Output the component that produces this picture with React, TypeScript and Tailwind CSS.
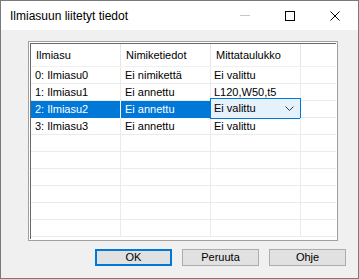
import React from 'react'

const rows = [
  { a: '0: Ilmiasu0', b: 'Ei nimikettä', c: 'Ei valittu' },
  { a: '1: Ilmiasu1', b: 'Ei annettu', c: 'L120,W50,t5' },
  { a: '2: Ilmiasu2', b: 'Ei annettu', c: 'Ei valittu', selected: true },
  { a: '3: Ilmiasu3', b: 'Ei annettu', c: 'Ei valittu' },
  { a: '', b: '', c: '' },
  { a: '', b: '', c: '' },
  { a: '', b: '', c: '' },
  { a: '', b: '', c: '' },
  { a: '', b: '', c: '' },
  { a: '', b: '', c: '' },
]

const Chevron = () => (
  <svg width="9" height="5" viewBox="0 0 9 5" className="block">
    <path d="M0.5 0.5 L4.5 4.5 L8.5 0.5" fill="none" stroke="#3c3c3c" strokeWidth="1" />
  </svg>
)

const Button = ({ label, primary }: { label: string; primary?: boolean }) => (
  <div
    className={
      primary
        ? 'w-[77px] h-[17px] flex items-center justify-center bg-[#e1e1e1] border-2 border-[#0078d7] text-[11px] text-black'
        : 'w-[77px] h-[17px] flex items-center justify-center bg-[#e1e1e1] border border-[#adadad] text-[11px] text-black'
    }
  >
    {label}
  </div>
)

export default function App() {
  return (
    <div
      className="w-[359px] h-[279px] flex flex-col border border-[#7a7a7a] bg-[#f0f0f0] overflow-hidden"
      style={{ fontFamily: '"Liberation Sans", Arial, sans-serif' }}
    >
      {/* title bar */}
      <div className="h-[29px] shrink-0 bg-white flex items-center justify-between">
        <div className="pl-[9px] text-[12px] text-black">Ilmiasuun liitetyt tiedot</div>
        <div className="flex items-center h-full pr-[1px]">
          <div className="w-[45px] h-full flex items-center justify-center">
            <div className="w-[10px] h-px bg-[#c8c8c8]" />
          </div>
          <div className="w-[45px] h-full flex items-center justify-center">
            <div className="w-[10px] h-[10px] border border-black" />
          </div>
          <div className="w-[45px] h-full flex items-center justify-center">
            <svg width="10" height="10" viewBox="0 0 10 10">
              <path d="M0.5 0.5 L9.5 9.5 M9.5 0.5 L0.5 9.5" stroke="#000" strokeWidth="1" />
            </svg>
          </div>
        </div>
      </div>

      {/* body */}
      <div className="flex-1 flex flex-col pt-[11px] pl-[27px] pr-[11px]">
        <div className="w-[310px] h-[200px] border border-[#a0a0a0] p-px bg-white">
          <div className="w-full h-full border-l border-t border-[#696969] bg-white overflow-hidden text-[11px] text-black">
            <div className="grid grid-cols-[90px_90px_90px_1fr] h-[23px] border-b border-[#f0f0f0]">
              <div className="border-r border-[#e5e5e5] pl-[5px] flex items-center">Ilmiasu</div>
              <div className="border-r border-[#e5e5e5] pl-[5px] flex items-center">Nimiketiedot</div>
              <div className="border-r border-[#e5e5e5] pl-[5px] flex items-center">Mittataulukko</div>
              <div />
            </div>
            {rows.map((r, i) => (
              <div key={i} className="grid grid-cols-[90px_90px_90px_1fr] h-[17px] border-b border-[#ebebeb]">
                <div
                  className={
                    r.selected
                      ? 'border-r border-white bg-[#0078d7] text-white pl-[4px] flex items-center'
                      : 'border-r border-[#ebebeb] pl-[4px] flex items-center'
                  }
                >
                  {r.a}
                </div>
                <div
                  className={
                    r.selected
                      ? 'border-r border-[#ebebeb] bg-[#0078d7] text-white pl-[4px] flex items-center'
                      : 'border-r border-[#ebebeb] pl-[4px] flex items-center'
                  }
                >
                  {r.b}
                </div>
                <div className="relative border-r border-[#ebebeb] pl-[3px] flex items-center">
                  {r.selected ? (
                    <div className="absolute left-[-1px] top-[-3px] w-[91px] h-[21px] border border-[#0078d7] bg-[#e5f1fb] flex items-center justify-between pl-[3px] pr-[6px]">
                      <span>{r.c}</span>
                      <Chevron />
                    </div>
                  ) : (
                    r.c
                  )}
                </div>
                <div />
              </div>
            ))}
          </div>
        </div>

        <div className="flex justify-end gap-[10px] mt-[8px] pr-px">
          <Button label="OK" primary />
          <Button label="Peruuta" />
          <Button label="Ohje" />
        </div>
      </div>
    </div>
  )
}
